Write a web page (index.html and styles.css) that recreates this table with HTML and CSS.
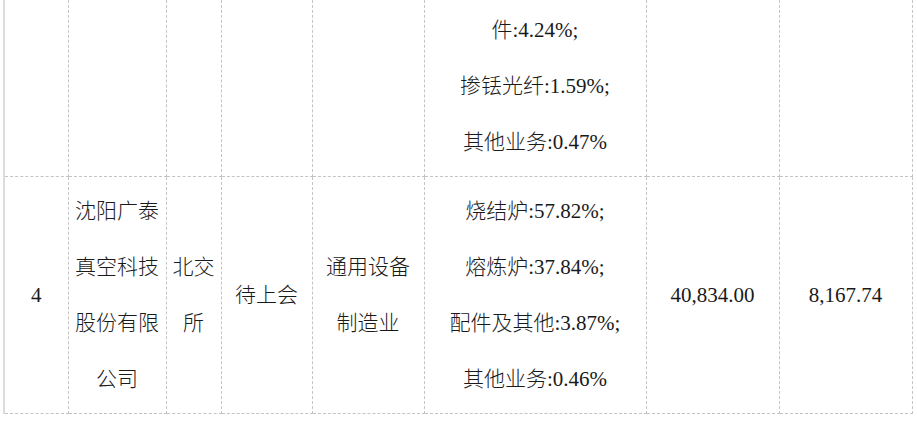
FILE: index.html
```html
<!DOCTYPE html>
<html lang="zh-CN">
<head>
<meta charset="utf-8">
<title>表格</title>
<link rel="stylesheet" href="styles.css">
</head>
<body>
<div class="wrap">
<table class="grid">
<colgroup>
<col class="c1"><col class="c2"><col class="c3"><col class="c4"><col class="c5"><col class="c6"><col class="c7"><col class="c8">
</colgroup>
<tr>
<td class="first"></td><td></td><td></td><td></td><td></td>
<td>件:4.24%;<br>掺铥光纤:1.59%;<br>其他业务:0.47%</td>
<td></td><td></td>
</tr>
<tr>
<td class="first">4</td>
<td>沈阳广泰真空科技股份有限公司</td>
<td>北交所</td>
<td>待上会</td>
<td class="ind">通用设备制造业</td>
<td>烧结炉:57.82%;<br>熔炼炉:37.84%;<br>配件及其他:3.87%;<br>其他业务:0.46%</td>
<td>40,834.00</td>
<td>8,167.74</td>
</tr>
</table>
</div>
</body>
</html>
```
FILE: styles.css
```css
html, body {
  margin: 0;
  padding: 0;
  background: #ffffff;
}
.wrap {
  padding-left: 3px;
  margin-top: -5px;
}
.grid {
  border-collapse: collapse;
  table-layout: fixed;
  width: 909px;
  font-family: "Liberation Serif", "Noto Sans CJK SC", serif;
  font-size: 21px;
  font-weight: 300;
  color: #1a1a1a;
}
.c1 { width: 64px; }
.c2 { width: 98px; }
.c3 { width: 55px; }
.c4 { width: 91px; }
.c5 { width: 112px; }
.c6 { width: 222px; }
.c7 { width: 133px; }
.c8 { width: 133px; }
.grid td {
  border: 1px dashed #c4c4c4;
  padding: 6px 4px;
  line-height: 56px;
  text-align: center;
  vertical-align: middle;
  word-break: break-all;
}
.grid td.first {
  border-left: 2px solid #dcdcdc;
}
.grid td.ind {
  padding-left: 6px;
  padding-right: 6px;
}
```
